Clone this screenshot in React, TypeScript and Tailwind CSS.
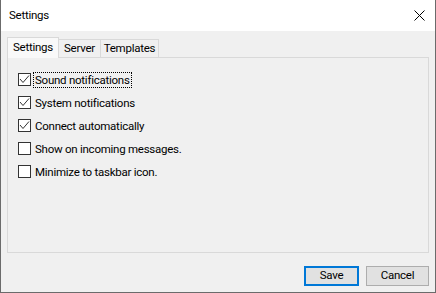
import React from "react";

const items = [
  { label: "Sound notifications", checked: true, focus: true },
  { label: "System notifications", checked: true },
  { label: "Connect automatically", checked: true },
  { label: "Show on incoming messages.", checked: false },
  { label: "Minimize to taskbar icon.", checked: false },
];

function Box({ checked }: { checked: boolean }) {
  return (
    <div className="w-[13px] h-[13px] border border-[#333333] bg-white flex-none relative">
      {checked && (
        <svg width="11" height="11" viewBox="0 0 11 11" className="absolute left-0 top-0">
          <path d="M1 5 L4 8.5 L10 1.5" fill="none" stroke="#333333" strokeWidth="1" />
        </svg>
      )}
    </div>
  );
}

export default function App() {
  return (
    <div
      className="w-[436px] h-[293px] flex flex-col bg-[#f0f0f0] border border-t-0 border-[#6b6b6b] overflow-hidden text-[11.5px] tracking-[-0.25px] text-black"
      style={{ fontFamily: 'Roboto, "Liberation Sans", sans-serif' }}
    >
      <div className="h-[31px] bg-white flex items-center justify-between pl-[8px] pr-[10px] flex-none">
        <span className="leading-none">Settings</span>
        <svg width="11" height="11" viewBox="0 0 11 11">
          <path d="M0.5 0.5 L10.5 10.5 M10.5 0.5 L0.5 10.5" stroke="#000" strokeWidth="1" />
        </svg>
      </div>
      <div className="flex-1 flex flex-col px-[6px] pt-[6px]">
        <div className="flex items-end h-[20px] relative z-10">
          <div className="w-[52px] h-[21px] -mb-px flex items-center justify-center bg-[#f9f9f9] border border-b-0 border-[#d9d9d9]">
            Settings
          </div>
          <div className="w-[42px] h-[18px] flex items-center justify-center border-t border-r border-[#d9d9d9] bg-[#f0f0f0]">
            Server
          </div>
          <div className="w-[58px] h-[18px] flex items-center justify-center border-t border-r border-[#d9d9d9] bg-[#f0f0f0]">
            Templates
          </div>
        </div>
        <div className="h-[196px] border border-[#d9d9d9] flex flex-col pt-[10px] pl-[10px] flex-none">
          {items.map((it) => (
            <div key={it.label} className="h-[23px] flex items-center gap-[2px]">
              <Box checked={it.checked} />
              <span
                className={
                  "leading-[14px] px-px " +
                  (it.focus ? "border border-dotted border-black" : "border border-transparent")
                }
              >
                {it.label}
              </span>
            </div>
          ))}
        </div>
        <div className="flex justify-end gap-[7px] mt-[13px]">
          <button className="w-[55px] h-[20px] border-2 border-[#0078d7] bg-[#e1e1e1] flex items-center justify-center leading-none">
            Save
          </button>
          <button className="w-[63px] h-[20px] border border-[#adadad] bg-[#e1e1e1] flex items-center justify-center leading-none">
            Cancel
          </button>
        </div>
      </div>
    </div>
  );
}
